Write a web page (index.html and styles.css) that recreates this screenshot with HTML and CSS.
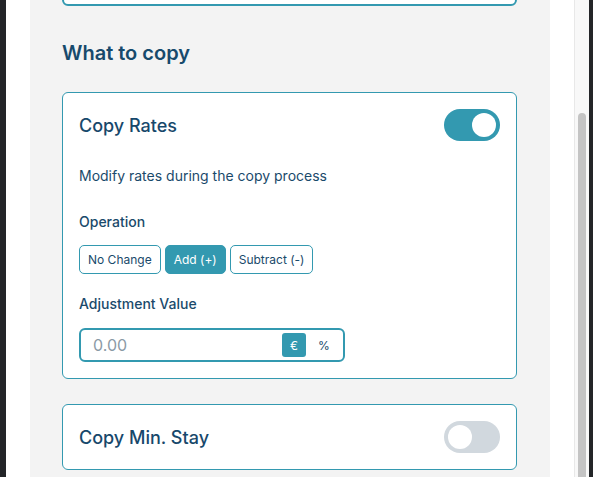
FILE: index.html
```html
<!DOCTYPE html>
<html lang="en">
<head>
  <meta charset="UTF-8" />
  <meta name="viewport" content="width=device-width, initial-scale=1" />
  <title>Copy Settings</title>
  <link rel="stylesheet" href="styles.css">
</head>
<body>
  <div class="edge"></div>
  <div class="gutter"></div>

  <div class="panel">
    <div class="prev-field"></div>

    <h2 class="section-title">What to copy</h2>

    <div class="card">
      <div class="card-head">
        <span class="card-title">Copy Rates</span>
        <span class="toggle on"><span class="knob"></span></span>
      </div>
      <p class="card-desc">Modify rates during the copy process</p>

      <p class="field-label">Operation</p>
      <div class="op-group">
        <button class="op-btn">No Change</button>
        <button class="op-btn active">Add (+)</button>
        <button class="op-btn">Subtract (-)</button>
      </div>

      <p class="field-label label-adjust">Adjustment Value</p>
      <div class="value-input">
        <input type="text" placeholder="0.00" />
        <div class="unit-group">
          <span class="unit active">€</span>
          <span class="unit">%</span>
        </div>
      </div>
    </div>

    <div class="card">
      <div class="card-head">
        <span class="card-title">Copy Min. Stay</span>
        <span class="toggle"><span class="knob"></span></span>
      </div>
    </div>
  </div>

  <div class="gutter gutter-right"></div>
  <div class="scrollbar"><div class="thumb"></div></div>
  <div class="edge edge-right"></div>
</body>
</html>
```

FILE: styles.css
```css
/* Reset */
* {
  margin: 0; padding: 0; box-sizing: border-box;
  font-family: Inter, "Noto Sans", sans-serif;
}
body {
  display: flex;
  height: 100vh;
  overflow: hidden;
  background: #fff;
  color: #1a4a6b;
}
/* Window edges */
.edge {
  width: 6px;
  background: #232528;
}
.edge-right {
  width: 4px;
}
.gutter {
  width: 24px;
  background: #fff;
}
.gutter-right {
  border-right: 1px solid #e8e8e8;
  width: 25px;
}
.scrollbar {
  width: 14px;
  background: #f8f8f8;
  padding: 113px 3px 0;
}
.thumb {
  height: 100%;
  background: #c4c4c4;
  border-radius: 4px 4px 0 0;
}
/* Panel */
.panel {
  width: 520px;
  background: #f3f3f3;
  padding: 0 33px 0 32px;
}
.prev-field {
  height: 40px;
  margin-top: -34px;
  background: #fff;
  border: 2px solid #3399b0;
  border-radius: 6px;
}
.section-title {
  margin: 33px 0 25px;
  font-size: 20px;
  line-height: 28px;
  font-weight: 600;
  color: #174a6c;
}
/* Cards */
.card {
  background: #fff;
  border: 1px solid #3399b0;
  border-radius: 6px;
  padding: 16px;
  margin-bottom: 25px;
}
.card-head {
  display: flex;
  align-items: center;
  justify-content: space-between;
  height: 32px;
}
.card-title {
  font-size: 18px;
  font-weight: 500;
  color: #17486b;
}
.toggle {
  width: 56px;
  height: 32px;
  border-radius: 16px;
  background: #d1d8de;
  display: flex;
  align-items: center;
  padding: 0 4px;
}
.toggle.on {
  background: #3399b0;
  justify-content: flex-end;
}
.knob {
  width: 24px;
  height: 24px;
  border-radius: 50%;
  background: #fff;
}
.card-desc {
  margin-top: 25px;
  font-size: 14px;
  line-height: 20px;
}
.field-label {
  margin-top: 26px;
  margin-bottom: 13px;
  font-size: 14px;
  line-height: 20px;
  font-weight: 500;
}
.label-adjust {
  margin-top: 20px;
  margin-bottom: 14px;
}
/* Operation buttons */
.op-group {
  display: flex;
  gap: 4px;
}
.op-btn {
  height: 29px;
  padding: 0 8px;
  font-size: 12px;
  color: #1a4a6b;
  background: #fff;
  border: 1px solid #3399b0;
  border-radius: 5px;
  cursor: pointer;
}
.op-btn.active {
  background: #3399b0;
  color: #fff;
}
/* Adjustment input */
.value-input {
  width: 266px;
  height: 34px;
  display: flex;
  align-items: center;
  border: 2px solid #3399b0;
  border-radius: 6px;
  padding: 0 7px 0 12px;
}
.value-input input {
  flex: 1;
  min-width: 0;
  border: none;
  outline: none;
  font-size: 16px;
  color: #1a4a6b;
  background: transparent;
}
.value-input input::placeholder {
  color: #8b9aa6;
}
.unit-group {
  display: flex;
  gap: 6px;
}
.unit {
  width: 24px;
  height: 24px;
  display: flex;
  align-items: center;
  justify-content: center;
  font-size: 12px;
  border-radius: 3px;
  color: #1a4a6b;
}
.unit.active {
  background: #3399b0;
  color: #fff;
}
```
